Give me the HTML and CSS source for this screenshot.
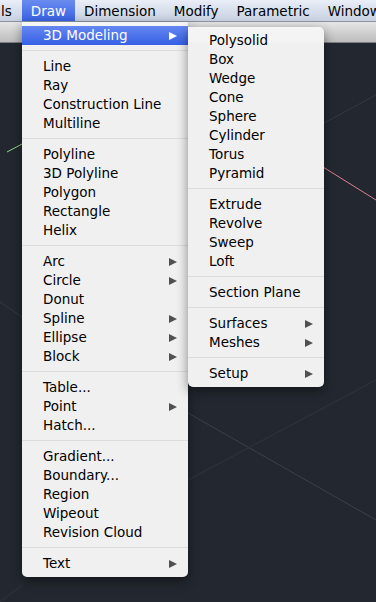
FILE: index.html
```html
<!DOCTYPE html>
<html lang="en">
<head>
  <meta charset="UTF-8">
  <title>Draw menu</title>
  <link rel="stylesheet" href="styles.css">
</head>
<body>
  <div class="screen">
    <nav class="menubar">
      <span class="menubar__item menubar__item--cut">ls</span>
      <span class="menubar__item menubar__item--active">Draw</span>
      <span class="menubar__item">Dimension</span>
      <span class="menubar__item">Modify</span>
      <span class="menubar__item">Parametric</span>
      <span class="menubar__item">Window</span>
    </nav>
    <div class="toolbar"></div>
    <div class="canvas"></div>

    <svg class="canvas__lines" viewBox="0 0 376 602" width="376" height="602">
      <line x1="7" y1="152" x2="22" y2="144" stroke="#8fd98f" stroke-width="1"/>
      <line x1="323" y1="167" x2="376" y2="200" stroke="#d9808d" stroke-width="1"/>
      <line x1="324" y1="123" x2="376" y2="95" stroke="#333944" stroke-width="1"/>
      <line x1="188" y1="413" x2="376" y2="520" stroke="#3a414c" stroke-width="1"/>
      <line x1="188" y1="480" x2="376" y2="380" stroke="#2f353f" stroke-width="1"/>
      <line x1="0" y1="302" x2="22" y2="317" stroke="#333944" stroke-width="1"/>
      <line x1="0" y1="602" x2="22" y2="585" stroke="#2f353f" stroke-width="1"/>
    </svg>

    <ul class="menu menu--draw">
      <li class="menu__item menu__item--active">3D Modeling<span class="menu__arrow"></span></li>
      <li class="menu__sep"></li>
      <li class="menu__item">Line</li>
      <li class="menu__item">Ray</li>
      <li class="menu__item">Construction Line</li>
      <li class="menu__item">Multiline</li>
      <li class="menu__sep"></li>
      <li class="menu__item">Polyline</li>
      <li class="menu__item">3D Polyline</li>
      <li class="menu__item">Polygon</li>
      <li class="menu__item">Rectangle</li>
      <li class="menu__item">Helix</li>
      <li class="menu__sep"></li>
      <li class="menu__item">Arc<span class="menu__arrow"></span></li>
      <li class="menu__item">Circle<span class="menu__arrow"></span></li>
      <li class="menu__item">Donut</li>
      <li class="menu__item">Spline<span class="menu__arrow"></span></li>
      <li class="menu__item">Ellipse<span class="menu__arrow"></span></li>
      <li class="menu__item">Block<span class="menu__arrow"></span></li>
      <li class="menu__sep"></li>
      <li class="menu__item">Table...</li>
      <li class="menu__item">Point<span class="menu__arrow"></span></li>
      <li class="menu__item">Hatch...</li>
      <li class="menu__sep"></li>
      <li class="menu__item">Gradient...</li>
      <li class="menu__item">Boundary...</li>
      <li class="menu__item">Region</li>
      <li class="menu__item">Wipeout</li>
      <li class="menu__item">Revision Cloud</li>
      <li class="menu__sep"></li>
      <li class="menu__item">Text<span class="menu__arrow"></span></li>
    </ul>

    <ul class="menu menu--sub">
      <li class="menu__item">Polysolid</li>
      <li class="menu__item">Box</li>
      <li class="menu__item">Wedge</li>
      <li class="menu__item">Cone</li>
      <li class="menu__item">Sphere</li>
      <li class="menu__item">Cylinder</li>
      <li class="menu__item">Torus</li>
      <li class="menu__item">Pyramid</li>
      <li class="menu__sep"></li>
      <li class="menu__item">Extrude</li>
      <li class="menu__item">Revolve</li>
      <li class="menu__item">Sweep</li>
      <li class="menu__item">Loft</li>
      <li class="menu__sep"></li>
      <li class="menu__item">Section Plane</li>
      <li class="menu__sep"></li>
      <li class="menu__item">Surfaces<span class="menu__arrow"></span></li>
      <li class="menu__item">Meshes<span class="menu__arrow"></span></li>
      <li class="menu__sep"></li>
      <li class="menu__item">Setup<span class="menu__arrow"></span></li>
    </ul>
  </div>
</body>
</html>
```

FILE: styles.css
```css
html, body {
  margin: 0;
  padding: 0;
}

body {
  font-family: "DejaVu Sans", "Liberation Sans", sans-serif;
  font-size: 13.5px;
  color: #000;
}

.screen {
  position: relative;
  width: 376px;
  height: 602px;
  overflow: hidden;
  background-color: #232830;
  display: flex;
  flex-direction: column;
}

/* top menu bar */
.menubar {
  display: flex;
  height: 21px;
  line-height: 22px;
  white-space: nowrap;
  background: linear-gradient(#e9eef7, #c8d1e2);
  border-bottom: 1px solid #8c94a4;
  flex-shrink: 0;
}

.menubar__item {
  padding: 0 9px;
}

.menubar__item--cut {
  padding: 0 10px 0 1px;
}

.menubar__item--active {
  color: #fff;
  background: linear-gradient(#6a8cf0, #3a62e4);
}

.toolbar {
  height: 20px;
  flex-shrink: 0;
  background: linear-gradient(#e6e6e6, #bdbdbd);
  border-bottom: 1px solid #7d7f84;
}

.canvas {
  flex: 1;
}

.canvas__lines {
  position: absolute;
  top: 0;
  left: 0;
}

/* dropdown menus */
.menu {
  position: absolute;
  margin: 0;
  padding: 4px 0;
  list-style: none;
  background-color: rgba(245, 245, 245, 0.98);
  box-shadow: 0 4px 12px rgba(0, 0, 0, 0.45);
}

.menu--draw {
  top: 22px;
  left: 22px;
  width: 166px;
  border-radius: 0 0 5px 5px;
}

.menu--sub {
  top: 27px;
  left: 188px;
  width: 136px;
  border-radius: 0 5px 5px 5px;
  z-index: 2;
}

.menu__item {
  display: flex;
  justify-content: space-between;
  align-items: center;
  height: 19px;
  line-height: 19px;
  padding: 0 11px 0 21px;
  white-space: nowrap;
}

.menu__item--active {
  color: #fff;
  background: linear-gradient(#6587f1, #3660e6);
}

.menu__arrow {
  width: 0;
  height: 0;
  border-left: 8px solid #505050;
  border-top: 4.5px solid transparent;
  border-bottom: 4.5px solid transparent;
}

.menu__item--active .menu__arrow {
  border-left-color: #fff;
}

.menu__sep {
  height: 1px;
  margin: 5px 0 6px;
  background-color: #dcdcdc;
}
```
